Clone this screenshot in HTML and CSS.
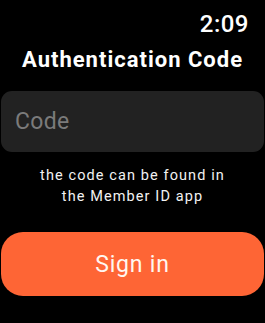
FILE: index.html
```html
<!DOCTYPE html>
<html lang="en">
<head>
    <meta charset="UTF-8">
    <title>Authentication Code</title>
    <link rel="stylesheet" href="styles.css">
</head>
<body>
<div class="watch">
    <div class="statusBar"><span class="time">2:09</span></div>
    <h1 class="title">Authentication Code</h1>
    <div class="codeField"><span class="placeholder">Code</span></div>
    <p class="hint">the code can be found in<br>the Member ID app</p>
    <a class="btnSignIn">Sign in</a>
</div>
</body>
</html>
```

FILE: styles.css
```css
html,body{margin:0;padding:0;background:#000;}
.watch{width:265px;height:323px;display:flex;flex-direction:column;font-family:Roboto,"Liberation Sans",sans-serif;color:#fff;overflow:hidden;}
.statusBar{display:flex;justify-content:flex-end;padding:10px 16px 0 0;height:28px;}
.time{font-size:24px;font-weight:500;line-height:28px;letter-spacing:0.5px;}
.title{margin:10px 0 0 0;font-size:22px;font-weight:700;line-height:24px;text-align:center;letter-spacing:1px;}
.codeField{margin:19px 1px 0 1px;height:61px;background:#222;border-radius:11px;display:flex;align-items:center;padding-left:14px;}
.placeholder{font-size:23px;color:#7b7b7b;letter-spacing:0.3px;}
.hint{margin:13px 0 0 0;font-size:14.5px;line-height:21px;text-align:center;letter-spacing:1.1px;color:#f2f2f2;}
.btnSignIn{margin:25px 1px 0 1px;height:64px;background:#fe6535;border-radius:22px;display:flex;align-items:center;justify-content:center;font-size:23px;color:#fff6f0;letter-spacing:0.8px;cursor:pointer;}
```
